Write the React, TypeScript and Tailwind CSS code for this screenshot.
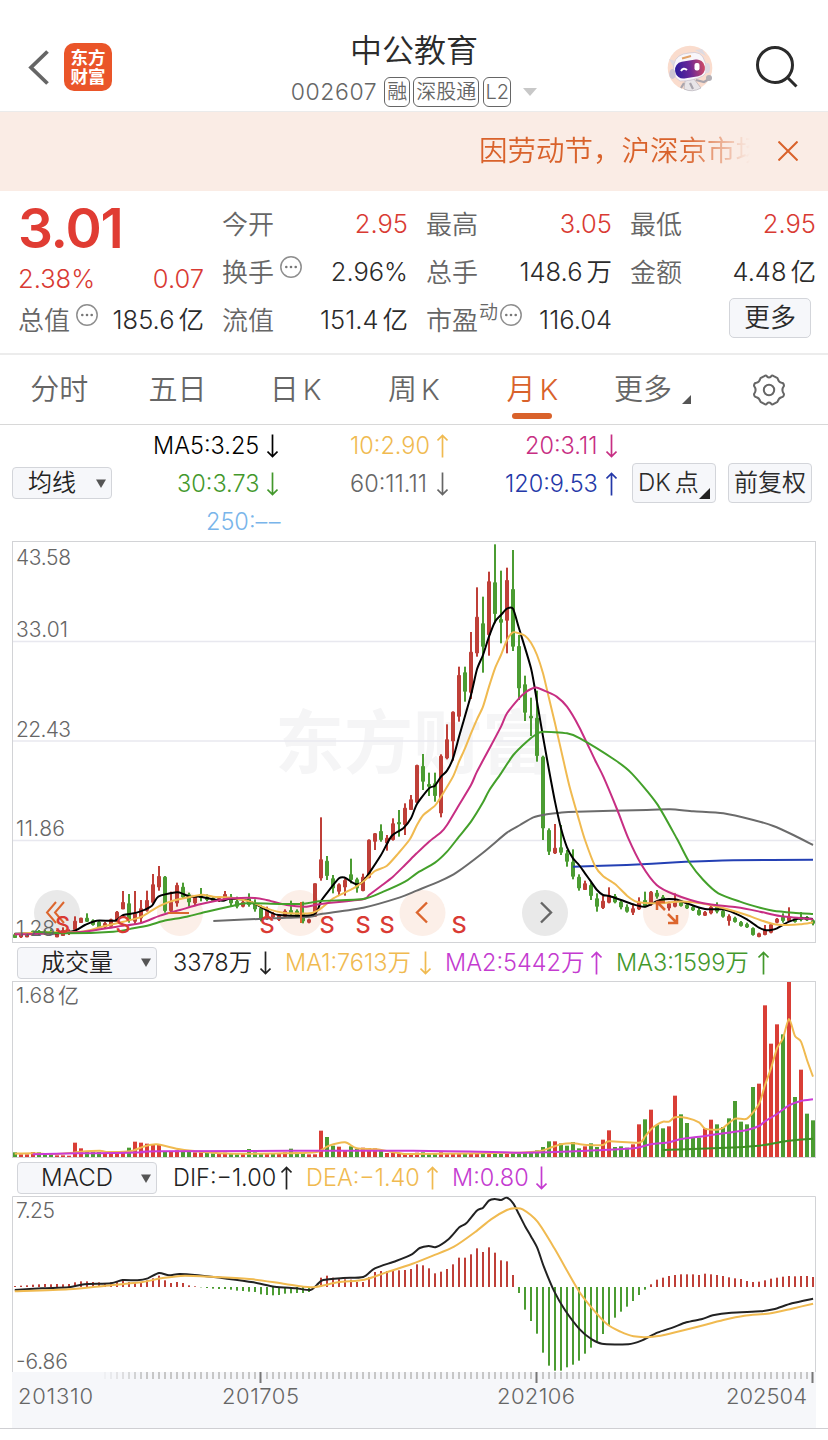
import React from 'react';
import clsx from 'clsx';

type Point = [number, number];
// direction, high, body top, body bottom, low
type Candle = ['r' | 'g', number, number, number, number];

const RED = '#bf3f38';
const GREEN = '#4b9c32';

const tabs = [
    { label: '分时' },
    { label: '五日' },
    { label: '日', k: true },
    { label: '周', k: true },
    { label: '月', k: true, active: true },
    { label: '更多', more: true },
];

const earlyCandles: Candle[] = [
    ['g', 579, 583, 594, 594], ['r', 583, 583, 592, 594], ['r', 583, 583, 592, 592], ['g', 572, 572, 583, 583], ['g', 570, 572, 583, 585],
    ['g', 570, 573, 583, 585], ['g', 568, 573, 583, 585], ['r', 570, 575, 592, 592], ['r', 562, 570, 588, 588], ['r', 568, 572, 582, 585],
    ['r', 529, 542, 570, 572], ['r', 533, 533, 549, 549], ['g', 520, 533, 545, 546], ['g', 538, 541, 555, 557], ['g', 540, 545, 562, 565],
    ['r', 546, 549, 562, 564], ['r', 536, 538, 560, 560], ['r', 513, 515, 545, 545], ['r', 453, 486, 508, 508], ['g', 462, 490, 542, 548],
    ['r', 453, 520, 545, 552], ['r', 480, 505, 535, 548], ['r', 452, 480, 512, 515], ['r', 402, 433, 488, 495], ['r', 378, 408, 442, 452],
    ['g', 408, 410, 513, 518], ['r', 455, 485, 513, 518], ['r', 428, 435, 490, 500], ['g', 428, 440, 472, 475], ['g', 458, 463, 487, 500],
    ['r', 465, 468, 490, 496], ['g', 444, 463, 474, 484], ['g', 463, 470, 480, 484], ['g', 468, 473, 483, 486], ['r', 470, 474, 483, 486],
    ['r', 453, 462, 480, 482], ['g', 462, 470, 490, 498], ['g', 470, 483, 500, 505], ['r', 482, 485, 500, 502], ['g', 460, 475, 495, 500],
    ['g', 478, 488, 508, 515], ['g', 495, 504, 540, 544], ['r', 500, 510, 530, 540], ['r', 516, 520, 532, 535], ['r', 522, 526, 540, 543],
    ['r', 508, 512, 530, 530], ['g', 482, 510, 520, 527], ['g', 508, 512, 530, 534], ['g', 485, 520, 544, 550], ['r', 536, 538, 548, 550],
    ['r', 430, 430, 530, 530],
];
const risingCandles: Candle[] = [
    ['r', 832, 958, 1015, 1022], ['g', 948, 962, 1008, 1020], ['g', 1005, 1015, 1045, 1060], ['r', 1030, 1033, 1055, 1067], ['r', 1015, 1020, 1042, 1067],
    ['g', 956, 1003, 1020, 1030], ['g', 1013, 1018, 1045, 1058], ['r', 1001, 1010, 1053, 1054], ['r', 898, 899, 1013, 1015], ['r', 879, 880, 905, 930],
    ['g', 853, 873, 900, 905], ['r', 885, 893, 910, 932], ['r', 835, 850, 900, 902], ['g', 810, 846, 853, 890], ['r', 790, 803, 855, 885],
    ['r', 765, 778, 810, 810], ['r', 674, 675, 788, 790], ['g', 642, 678, 725, 750], ['g', 698, 732, 740, 768], ['g', 698, 730, 768, 785],
    ['r', 643, 647, 820, 832], ['r', 553, 598, 655, 658], ['r', 514, 515, 604, 662], ['r', 380, 405, 530, 545], ['g', 380, 397, 455, 485],
    ['r', 276, 335, 458, 477], ['r', 142, 230, 340, 350], ['g', 170, 250, 320, 398], ['r', 95, 124, 285, 347], ['g', 13, 127, 222, 250],
    ['g', 92, 237, 248, 310], ['r', 83, 120, 242, 340], ['g', 30, 147, 320, 333], ['g', 285, 318, 445, 480], ['g', 407, 433, 518, 543],
    ['g', 473, 527, 535, 588], ['g', 452, 533, 648, 665], ['g', 647, 650, 865, 900], ['g', 865, 870, 935, 945], ['r', 852, 923, 940, 942],
    ['g', 855, 922, 938, 945],
];
const fallingCandles: Candle[] = [
    ['g', 270, 280, 305, 320], ['g', 268, 305, 350, 358], ['g', 343, 350, 385, 392], ['r', 362, 370, 390, 390], ['g', 367, 375, 408, 420],
    ['g', 400, 415, 440, 455], ['r', 408, 422, 444, 447], ['r', 382, 405, 428, 430], ['g', 402, 408, 427, 430], ['g', 422, 425, 442, 448],
    ['g', 433, 440, 455, 458], ['r', 435, 445, 458, 465], ['r', 412, 425, 448, 450], ['g', 395, 420, 438, 442], ['r', 393, 395, 430, 438],
    ['g', 390, 398, 410, 416], ['g', 405, 410, 428, 432], ['r', 425, 430, 445, 452], ['r', 400, 425, 440, 442], ['g', 425, 427, 438, 440],
    ['g', 430, 434, 445, 447], ['g', 438, 441, 451, 453], ['g', 443, 450, 465, 467], ['r', 453, 456, 467, 468], ['r', 435, 440, 460, 463],
    ['g', 427, 440, 455, 460], ['g', 448, 452, 470, 473], ['r', 463, 468, 483, 497], ['g', 470, 473, 486, 488], ['g', 483, 486, 498, 500],
    ['g', 488, 492, 502, 504], ['g', 502, 504, 525, 527], ['r', 518, 520, 531, 532], ['r', 495, 510, 525, 526], ['r', 490, 493, 518, 520],
    ['r', 474, 476, 488, 490], ['g', 460, 470, 483, 488], ['r', 442, 470, 483, 486], ['g', 472, 475, 486, 488], ['g', 456, 470, 480, 484],
    ['g', 468, 471, 481, 483], ['g', 478, 481, 491, 496],
];
const shift = (rows: Candle[], base: number) =>
    rows.map(([dir, ...v]) => ({ dir, v: v.map((n) => base + n / 3) }));
const candles = [...shift(earlyCandles, 740), ...shift(risingCandles, 540), ...shift(fallingCandles, 760)];

const place = (pts: number[], x0: number, y0: number, sx = 3): Point[] => {
    const out: Point[] = [];
    for (let i = 0; i < pts.length; i += 2) out.push([x0 + pts[i] / sx, y0 + pts[i + 1] / 3]);
    return out;
};

const priceLine = (a: number[], b: number[], c: number[]) => [...place(a, 0, 740), ...place(b, 320, 540), ...place(c, 560, 760)];

const averages = [
    {
        color: '#6b6b6b',
        pts: priceLine(
            [640, 543, 820, 535, 930, 530],
            [3, 1122, 130, 1103, 240, 1072, 290, 1052, 363, 1022, 410, 997, 489, 938, 561, 878, 600, 855, 640, 832, 680, 823],
            [0, 158, 50, 155, 260, 150, 330, 148, 400, 154, 490, 160, 580, 180, 640, 198, 700, 225, 759, 255],
        ),
    },
    { color: '#2440b4', pts: priceLine([], [], [39, 320, 200, 315, 350, 307, 520, 301, 759, 299]) },
    {
        color: '#000000',
        pts: priceLine(
            [44, 581, 130, 580, 170, 580, 225, 572, 255, 555, 290, 542, 345, 542, 370, 525, 410, 518, 455, 498, 475, 470, 530, 457, 545, 460, 570, 470, 600, 470, 640, 478, 670, 482, 690, 476, 745, 482, 790, 505, 835, 525, 940, 524],
            [3, 1083, 20, 1060, 57, 1015, 75, 1013, 93, 1025, 111, 1033, 129, 1025, 147, 1000, 183, 945, 215, 888, 250, 865, 273, 835, 291, 792, 327, 745, 345, 737, 363, 710, 381, 692, 399, 655, 420, 580, 453, 465, 471, 388, 489, 345, 507, 290, 525, 245, 543, 225, 561, 206, 579, 206, 597, 265, 633, 385, 651, 485, 669, 590, 687, 690, 705, 785],
            [3, 205, 21, 262, 39, 295, 57, 315, 75, 340, 93, 365, 111, 390, 129, 405, 147, 408, 183, 420, 219, 433, 255, 440, 300, 420, 345, 418, 381, 430, 435, 447, 489, 448, 525, 460, 561, 478, 597, 503, 615, 510, 633, 510, 651, 505, 687, 485, 723, 475, 759, 477],
        ),
    },
    {
        color: '#f0ba50',
        pts: priceLine(
            [44, 583, 98, 578, 240, 575, 300, 562, 370, 545, 420, 532, 450, 515, 475, 500, 510, 485, 560, 473, 605, 464, 640, 470, 690, 473, 745, 483, 800, 505, 850, 518, 930, 520],
            [3, 1105, 40, 1075, 100, 1045, 129, 1025, 165, 993, 200, 978, 235, 940, 270, 897, 291, 855, 310, 825, 345, 797, 363, 770, 399, 710, 417, 665, 435, 625, 453, 580, 471, 538, 489, 500, 507, 440, 525, 385, 543, 345, 561, 300, 579, 277, 597, 280, 615, 287, 633, 308, 651, 345, 669, 400, 687, 475, 705, 550],
            [10, 0, 30, 85, 57, 180, 75, 240, 105, 318, 129, 348, 165, 372, 201, 407, 230, 425, 290, 430, 350, 425, 400, 427, 450, 435, 500, 447, 560, 465, 600, 480, 640, 492, 680, 495, 720, 493, 759, 487],
        ),
    },
    {
        color: '#c72e83',
        pts: priceLine(
            [44, 583, 98, 582, 250, 575, 350, 560, 420, 550, 480, 527, 540, 510, 600, 493, 660, 480, 700, 475, 765, 474, 800, 480, 860, 495, 920, 500],
            [3, 1092, 129, 1078, 147, 1065, 183, 1038, 219, 1010, 255, 975, 290, 940, 327, 905, 363, 877, 381, 855, 417, 795, 453, 735, 471, 695, 507, 628, 543, 560, 561, 520, 597, 475, 615, 458, 633, 447, 651, 443, 680, 455, 710, 470, 741, 500, 777, 560],
            [105, 0, 130, 50, 172, 150, 205, 235, 245, 315, 290, 375, 340, 402, 430, 430, 530, 442, 600, 455, 660, 468, 759, 478],
        ),
    },
    {
        color: '#43a02a',
        pts: priceLine(
            [98, 575, 200, 580, 340, 575, 400, 565, 450, 555, 490, 543, 560, 530, 620, 515, 700, 497, 740, 490, 900, 492],
            [3, 1083, 129, 1077, 190, 1055, 255, 1025, 290, 1000, 345, 968, 381, 935, 417, 890, 453, 845, 489, 787, 507, 752, 543, 700, 580, 645, 620, 605, 650, 582, 669, 575, 741, 580, 780, 595],
            [165, 0, 215, 40, 290, 130, 350, 235, 390, 310, 430, 360, 475, 400, 540, 425, 600, 443, 640, 452, 700, 458, 759, 462],
        ),
    },
];

const volumes: [string, number][] = [
    ['g', 14], ['r', 8], ['r', 8], ['r', 15], ['g', 14], ['g', 9], ['g', 9], ['r', 5], ['r', 5], ['r', 4],
    ['r', 43], ['r', 26], ['g', 17], ['g', 16], ['g', 15], ['r', 12], ['r', 12], ['r', 12], ['r', 12], ['g', 28],
    ['r', 46], ['r', 43], ['r', 40], ['r', 37], ['r', 36], ['g', 18], ['r', 16], ['r', 20], ['g', 16], ['g', 15],
    ['r', 14], ['r', 14], ['g', 12], ['g', 11], ['r', 11], ['r', 13], ['g', 9], ['g', 8], ['r', 9], ['g', 24],
    ['g', 14], ['g', 12], ['r', 12], ['g', 12], ['r', 11], ['r', 14], ['g', 25], ['g', 15], ['g', 14], ['r', 8],
    ['r', 8], ['r', 79], ['g', 60], ['g', 34], ['r', 31], ['r', 20], ['g', 32], ['g', 24], ['r', 28], ['r', 27],
    ['r', 26], ['g', 18], ['r', 12], ['r', 12], ['r', 12], ['r', 11], ['r', 10], ['r', 13], ['g', 14], ['g', 12],
    ['g', 10], ['r', 14], ['r', 10], ['r', 9], ['r', 11], ['g', 9], ['r', 10], ['r', 12], ['g', 9], ['r', 12],
    ['g', 12], ['g', 9], ['r', 10], ['g', 13], ['g', 15], ['g', 15], ['g', 15], ['g', 20], ['g', 30], ['g', 47],
    ['r', 47], ['g', 41], ['g', 34], ['g', 45], ['g', 26], ['r', 32], ['g', 41], ['g', 30], ['r', 52], ['r', 80],
    ['g', 30], ['g', 32], ['g', 28], ['r', 38], ['r', 98], ['g', 113], ['r', 142], ['g', 96], ['g', 86], ['r', 92],
    ['r', 184], ['g', 128], ['g', 102], ['g', 58], ['g', 58], ['r', 86], ['r', 112], ['g', 98], ['g', 90], ['g', 116],
    ['g', 168], ['g', 106], ['g', 98], ['g', 210], ['r', 220], ['r', 455], ['r', 340], ['r', 398], ['g', 368], ['r', 525],
    ['g', 180], ['r', 262], ['g', 130], ['g', 110],
];

const volumeLines = [
    {
        color: '#f0ba50',
        pts: [
            ...place([44, 521, 100, 520, 160, 522, 220, 518, 240, 515, 300, 512, 320, 516, 390, 514, 430, 500, 470, 493, 540, 508, 600, 515, 700, 521, 850, 520, 950, 516, 985, 498, 1035, 487, 1070, 505, 1130, 508, 1200, 520, 1240, 522], 0, 980),
            ...place([0, 548, 60, 543, 87, 535, 123, 523, 160, 520, 200, 525, 249, 525, 267, 514, 357, 518, 375, 500, 393, 478, 411, 464, 429, 455, 447, 455, 465, 442, 501, 444, 537, 457, 555, 476, 591, 479, 609, 474, 645, 446, 681, 446, 717, 402, 735, 345, 753, 295, 771, 235, 789, 205, 807, 147, 825, 198, 843, 215, 861, 270, 879, 320], 520, 970),
        ],
    },
    {
        color: '#cb3bd6',
        pts: [
            ...place([98, 523, 230, 520, 350, 519, 430, 517, 480, 514, 1240, 512], 0, 980),
            ...place([0, 548, 105, 546, 230, 541, 340, 535, 393, 523, 447, 517, 483, 507, 555, 498, 610, 490, 681, 480, 717, 468, 735, 454, 771, 432, 807, 406, 843, 393, 879, 388], 520, 970),
        ],
    },
    { color: '#3f8f24', pts: place([429, 540, 600, 534, 717, 527, 771, 518, 807, 512, 879, 506], 520, 970) },
];

const macd = [
    3, 4, 5, 7, 8, 9, 8, 9, 8, 9, 14, 17, 17, 15, 14, 12, 14, 16, 18, 15, 12, 13, 20, 26, 34, 20, 12, 15, 12, 5, 2, -1, -3, -5, -6, -6, -8, -11, -12, -14,
    -15, -22, -24, -25, -24, -20, -19, -18, -18, -15, 2, 28, 34, 28, 25, 23, 22, 15, 15, 30, 45, 48, 48, 48, 50, 51, 54, 68, 65, 56,
    41, 46, 54, 68, 88, 88, 98, 116, 105, 119, 103, 80, 77, 36, -18, -68, -102, -140, -197, -236, -251, -251, -241, -233, -221, -200, -182, -165, -141, -115,
    -92, -74, -59, -42, -24, -8, 8, 22, 28, 33, 36, 38, 38, 38, 36, 40, 38, 36, 33, 29, 26, 24, 18, 15, 16, 20, 25, 28, 31, 33, 32, 33, 33, 30,
];

const dif = place(
    [28, 300, 80, 295, 130, 292, 160, 283, 210, 280, 232, 270, 260, 271, 280, 265, 301, 249, 320, 256, 340, 252, 375, 256, 430, 266, 480, 277, 520, 290, 560, 295, 588, 300, 600, 285, 612, 270, 650, 264, 688, 261, 710, 235, 750, 213, 780, 193, 795, 174, 812, 168, 826, 171, 850, 147, 870, 112, 883, 100, 903, 62, 915, 53, 926, 32, 937, 27, 949, 30, 960, 23, 972, 40, 983, 73, 995, 110, 1006, 140, 1018, 175, 1030, 230, 1050, 305, 1070, 360, 1098, 418, 1120, 447, 1140, 461, 1190, 463, 1215, 452, 1245, 428, 1275, 412, 1300, 397, 1330, 387, 1350, 376, 1385, 368, 1440, 364, 1465, 358, 1500, 340, 1540, 326],
    0, 1190, 1.894,
);
const dea = place(
    [28, 304, 130, 298, 200, 287, 270, 276, 305, 265, 350, 257, 420, 262, 480, 268, 540, 282, 590, 292, 640, 277, 690, 269, 730, 248, 780, 222, 820, 197, 860, 170, 900, 126, 930, 88, 960, 60, 975, 55, 990, 58, 1018, 95, 1050, 175, 1095, 300, 1120, 352, 1150, 403, 1175, 425, 1200, 439, 1230, 441, 1260, 434, 1310, 415, 1370, 390, 1410, 377, 1460, 370, 1500, 356, 1540, 341],
    0, 1190, 1.894,
);

const toPath = (pts: Point[]) =>
    pts.reduce((d, p, i) => {
        if (i === 0) return `M${p[0]} ${p[1]}`;
        const a = pts[i - 2] ?? pts[i - 1];
        const b = pts[i - 1];
        const c = pts[i + 1] ?? p;
        return `${d}C${b[0] + (p[0] - a[0]) / 8} ${b[1] + (p[1] - a[1]) / 8} ${p[0] - (c[0] - b[0]) / 8} ${p[1] - (c[1] - b[1]) / 8} ${p[0]} ${p[1]}`;
    }, '');

const Line = ({ pts, color }: { pts: Point[]; color: string }) => (
    <path d={toPath(pts)} fill="none" stroke={color} strokeWidth="2" strokeLinejoin="round" />
);

const Arrow = ({ up = false }: { up?: boolean }) => (
    <svg width="11" height="24" viewBox="0 0 11 24" fill="none" stroke="currentColor" strokeWidth="1.7" className={clsx('shrink-0', up && 'rotate-180')}>
        <path d="M5.5 .5v22M.5 17.5l5 5 5-5" />
    </svg>
);

const Info = () => (
    <svg width="22" height="22" viewBox="0 0 22 22" className="shrink-0">
        <circle cx="11" cy="11" r="10.2" fill="none" stroke="#8e8e8e" strokeWidth="1.5" />
        <circle cx="6.3" cy="11" r="1.3" fill="#777" />
        <circle cx="11" cy="11" r="1.3" fill="#777" />
        <circle cx="15.7" cy="11" r="1.3" fill="#777" />
    </svg>
);

const Robot = () => (
    <svg width="48" height="48" viewBox="0 0 48 48">
        <defs>
            <linearGradient id="visor" x1="0" y1="0" x2="1" y2="0">
                <stop offset="0" stopColor="#2c1d9e" />
                <stop offset=".5" stopColor="#6a2796" />
                <stop offset="1" stopColor="#cf4a66" />
            </linearGradient>
        </defs>
        <circle cx="24" cy="24" r="22.3" fill="#fadccd" />
        <path d="M19 37l9-2 7 9q-9 5-17 1z" fill="#e8e5e8" stroke="#b5b0b8" strokeWidth=".7" />
        <path d="M18 39l-3 5M30 36l8 2 5-3M24 39l3 6" stroke="#a9a5ad" strokeWidth="2.2" fill="none" />
        <circle cx="43" cy="34" r="3" fill="#b3afb5" />
        <path d="M3 15l9 3-4 6zM29 6l7-1 4 7z" fill="#dedae1" />
        <path d="M8 20Q10 10 23 9Q36 6 39 18Q43 28 37 32Q27 37 14 37Q5 32 8 20z" fill="#f8f6fa" stroke="#cfc9d4" strokeWidth=".8" />
        <ellipse cx="6.5" cy="30" rx="3.2" ry="5" fill="#cbc5d2" />
        <ellipse cx="41.500" cy="24" rx="2.500" ry="5" fill="#ded9e2" />
        <path d="M16 14.500l9-2.500" stroke="#e2a166" strokeWidth="2" />
        <rect x="9" y="16.500" width="30" height="17" rx="8" fill="url(#visor)" transform="rotate(-9 24 25)" />
        <path d="M15 27q2.500-4 6-1" stroke="#fff" strokeWidth="2" fill="none" />
        <rect x="28.500" y="19" width="5" height="7.500" rx="2" fill="#fff" />
    </svg>
);

const Gear = () => (
    <svg width="34" height="34" viewBox="0 0 34 34" fill="none" stroke="#666" strokeWidth="2" strokeLinejoin="round">
        <path d="M12.3 3.1Q14.2 1.800 15 3.500Q17 5.500 19 3.500Q19.800 1.800 21.700 3.100L25.500 5.200Q26.800 9.300 29.600 9.800Q31.800 10 32 12.800Q28.800 17 32 21.200Q31.800 24 29.600 24.200Q26.800 24.700 25.500 28.800L21.700 30.900Q19.800 32.200 19 30.500Q17 28.500 15 30.500Q14.200 32.200 12.300 30.900L8.500 28.800Q7.200 24.700 4.400 24.200Q2.200 24 2 21.200Q5.200 17 2 12.800Q2.200 10 4.400 9.800Q7.200 9.300 8.500 5.200Z" />
        <circle cx="17" cy="17" r="5.2" />
    </svg>
);

type QuoteProps = { label: string; value: string; unit?: string; red?: boolean; info?: boolean; sup?: string };

const Quote = ({ label, value, unit, red, info, sup }: QuoteProps) => (
    <div className="flex h-12 items-center whitespace-nowrap">
        <span className="pt-0.5 text-[26px] text-[#666]">{label}</span>
        {sup && <span className="-mt-4 ml-px mr-0.5 text-[19px] text-[#666]">{sup}</span>}
        {info && <span className={clsx('-mt-2.5', !sup && 'ml-1.5')}><Info /></span>}
        <span className={clsx('ml-auto text-[25.5px]', red ? 'text-[#d93a33]' : 'text-[#2b2b2b]')}>
            {value}
            {unit && <span className="ml-1">{unit}</span>}
        </span>
    </div>
);

const Select = ({ text, className }: { text: string; className: string }) => (
    <div className={clsx('flex h-8 items-center rounded border border-[#d3d5da] bg-[#f6f7fa] text-2xl text-[#222]', className)}>
        <span className="flex-1 pr-[5px] text-center">{text}</span>
        <svg width="10" height="9" viewBox="0 0 10 9"><path d="M0 .5h10L5 9z" fill="#555" /></svg>
    </div>
);

const Indicator = ({ text, up, className }: { text: string; up?: boolean; className: string }) => (
    <span className={clsx('flex items-center justify-between whitespace-nowrap text-[23.5px]', className)}>
        <span>{text}</span>
        <Arrow up={up} />
    </span>
);

const axisText = { fontSize: 21, fill: '#666' };

const PriceChart = () => (
    <svg width="828" height="403" viewBox="0 541 828 403" className="block">
        <text x="275" y="768" fontSize="69" fontWeight="700" fill="#f5f5f6" textLength="276">东方财富</text>
        <rect x="12.5" y="541.5" width="803" height="401" fill="none" stroke="#d2d3d6" />
        {[641.5, 741, 840.5].map((y) => <path key={y} d={`M13 ${y}H815`} stroke="#e8e8ef" strokeWidth="1.3" />)}
        <circle cx="57" cy="913" r="23" fill="#e9e9e9" />
        <circle cx="545" cy="913" r="23" fill="#e9e9e9" />
        {[180, 300, 422.5, 666].map((x) => <circle key={x} cx={x} cy="913" r="23" fill="#fcefe8" />)}
        {candles.map(({ dir, v }, i) => (
            <g key={i} fill={dir === 'r' ? RED : GREEN}>
                <rect x={14 + i * 6} y={v[0]} width="2" height={Math.max(1, v[3] - v[0])} />
                <rect x={13 + i * 6} y={v[1]} width="4" height={Math.max(1.5, v[2] - v[1])} rx=".7" />
            </g>
        ))}
        {averages.map((a, i) => <Line key={i} {...a} />)}
        <g {...axisText}>
            <text x="16" y="564.500" textLength="55">43.58</text>
            <text x="16" y="636.500" textLength="52">33.01</text>
            <text x="16" y="736.500" textLength="55">22.43</text>
            <text x="16" y="835.500" textLength="49">11.86</text>
            <text x="16" y="936" textLength="39">1.28</text>
        </g>
        <g fill="none" stroke="#dc662e" strokeWidth="2">
            <path d="M56 902L47 912.5L56 923M64 902L55 912.5L64 923M168 913h21M301 902v21" />
            <path d="M427 902.5L417 912.5L427 922.5" strokeWidth="2.4" />
            <path d="M657 910v-8h8M657 902l8 8M677 915v8h-9M677 923l-9-9" strokeWidth="2.5" />
            <path d="M541 902.5L551 912.5L541 922.5" stroke="#666" strokeWidth="2.4" />
        </g>
        {[62.5, 123, 267, 327, 363, 387, 459].map((x) => (
            <text key={x} x={x} y="932.5" textAnchor="middle" fontSize="23.5" fontWeight="500" fill="#d93a33">S</text>
        ))}
    </svg>
);

const VolumeChart = () => (
    <svg width="828" height="177" viewBox="0 981 828 177" className="block">
        <rect x="12.5" y="981.5" width="803" height="176" fill="none" stroke="#d2d3d6" />
        {volumes.map(([dir, h], i) => (
            <rect key={i} x={13 + i * 6} y={1157 - h / 3} width="4" height={h / 3} fill={dir === 'r' ? '#d93e36' : GREEN} />
        ))}
        {volumeLines.map((l, i) => <Line key={i} {...l} />)}
        <text x="16" y="1002.5" textLength="39" {...axisText}>1.68</text>
        <text x="58" y="1003" {...axisText}>亿</text>
    </svg>
);

const MacdChart = () => (
    <svg width="828" height="176" viewBox="0 1196 828 176" className="block overflow-visible">
        <path d="M12.5 1372V1196.5H815.5V1372" fill="none" stroke="#d2d3d6" />
        {macd.map((h, i) => (
            <rect key={i} x={14 + i * 6} y={h > 0 ? 1287 - h / 3 : 1287} width="2" height={Math.abs(h) / 3} fill={h > 0 ? RED : GREEN} />
        ))}
        <Line pts={dif} color="#222" />
        <Line pts={dea} color="#f0ba50" />
        <g {...axisText}>
            <text x="16" y="1218" textLength="39">7.25</text>
            <text x="16" y="1368.5" textLength="52">-6.86</text>
        </g>
    </svg>
);

const TimeAxis = () => (
    <div className="border-b border-[#cfcfd3]">
        <svg width="828" height="56" viewBox="0 1372 828 56" className="block">
            <rect x="12" y="1372" width="804" height="56" fill="#f6f7fa" />
            {Array.from({ length: 119 }, (_, k) => k + 15).map((i) => {
                const major = i === 41 || i === 87 || i === 133;
                return (
                    <rect key={i} x={14.2 + i * 6 - (major ? 0.7 : 0)} y="1372" width={major ? 2 : 1.6} height={major ? 11 : 7} fill={major ? '#777' : '#bbb'} opacity={Math.min(1, (i - 14) / 8)} />
                );
            })}
            <g fontSize="22" fill="#666">
                <text x="18" y="1404" textLength="75">201310</text>
                <text x="222" y="1404" textLength="77">201705</text>
                <text x="497" y="1404" textLength="78">202106</text>
                <text x="726" y="1404" textLength="81">202504</text>
            </g>
        </svg>
    </div>
);

const App = () => {
    return (
        <div className="h-[1440px] w-[828px] overflow-hidden bg-white font-['Inter','Noto_Sans_CJK_SC',sans-serif] font-[350] leading-none text-[#2b2b2b]">
            {/* ---header-------- */}
            <header className="flex h-28 items-start border-b border-[#ebebeb] pl-7">
                <svg width="22" height="36" viewBox="0 0 22 36" className="mt-[49px]" fill="none" stroke="#666" strokeWidth="3.8">
                    <path d="M19.5 2.5L3 18.5L19.5 34.5" />
                </svg>
                <div className="ml-3.5 mt-[43px] flex size-12 flex-col items-center justify-center rounded-[10px] bg-[#ea5529] text-[17.5px] font-bold leading-[19px] text-white">
                    <span>东方</span>
                    <span>财富</span>
                </div>
                <div className="ml-[176px] flex w-[252px] flex-col items-center pt-[35px]">
                    <h1 className="text-[32px] leading-8">中公教育</h1>
                    <div className="mt-2.5 flex h-[30px] items-center text-[#666]">
                        <span className="mr-[7px] text-[23px] tracking-[0.6px]">002607</span>
                        <span className="mr-[3px] flex h-[30px] w-[26px] items-center justify-center rounded-md border border-[#666] text-xl">融</span>
                        <span className="mr-1 flex h-[30px] w-[66px] items-center justify-center rounded-md border border-[#666] text-xl">深股通</span>
                        <span className="mr-3 flex h-[30px] w-[28px] items-center justify-center rounded-md border border-[#666] text-xl">L2</span>
                        <svg width="14" height="8" viewBox="0 0 14 8"><path d="M0 0h14L7 8z" fill="#c8c8c8" /></svg>
                    </div>
                </div>
                <div className="ml-[126px] mt-11"><Robot /></div>
                <svg width="46" height="46" viewBox="0 0 46 46" className="ml-10 mt-11" fill="none" stroke="#2b2b2b" strokeWidth="3">
                    <circle cx="21" cy="21" r="17.5" />
                    <path d="M33 33L42.500 42.500" />
                </svg>
            </header>

            {/* ---notice-------- */}
            <div className="flex h-[79px] items-center bg-[#faece5] pb-px text-[#d9622b]">
                <div className="ml-[479px] w-[271px] overflow-hidden whitespace-nowrap text-[28.5px] leading-10 [mask-image:linear-gradient(to_right,black_76%,transparent)]">
                    因劳动节，沪深京市场
                </div>
                <svg width="20" height="20" viewBox="0 0 20 20" className="ml-7" stroke="currentColor" strokeWidth="2">
                    <path d="M.5 .5l19 19M19.5 .5l-19 19" />
                </svg>
            </div>

            {/* ---quote-------- */}
            <section className="flex h-[164px] gap-[18px] border-b-2 border-[#ececec] pl-[18px] pt-[9px]">
                <div className="w-[186px] shrink-0">
                    <p className="h-14 text-[55px] font-semibold leading-[56px] tracking-[-1.2px] text-[#e03c33]">3.01</p>
                    <p className="flex h-10 items-center justify-between pt-1.5 text-[25.5px] text-[#d93a33]">
                        <span>2.38%</span>
                        <span>0.07</span>
                    </p>
                    <Quote label="总值" value="185.6" unit="亿" info />
                </div>
                <div className="w-[186px] shrink-0">
                    <Quote label="今开" value="2.95" red />
                    <Quote label="换手" value="2.96%" info />
                    <Quote label="流值" value="151.4" unit="亿" />
                </div>
                <div className="w-[186px] shrink-0">
                    <Quote label="最高" value="3.05" red />
                    <Quote label="总手" value="148.6" unit="万" />
                    <Quote label="市盈" value="116.04" sup="动" info />
                </div>
                <div className="w-[186px] shrink-0">
                    <Quote label="最低" value="2.95" red />
                    <Quote label="金额" value="4.48" unit="亿" />
                    <button className="ml-[99px] mt-0.5 flex h-10 w-[82px] items-center justify-center rounded-[5px] border border-[#d3d5da] bg-[#f6f7fa] text-[26px]">更多</button>
                </div>
            </section>

            {/* ---period tabs-------- */}
            <nav className="grid h-[70px] grid-cols-7 border-b border-[#d8d8d8] text-[29px] text-[#666]">
                {tabs.map((tab) => (
                    <div key={tab.label} className={clsx('relative flex items-center justify-center', tab.active && 'text-[#d9622b]')}>
                        {tab.label}
                        {tab.k && <span className="ml-1">K</span>}
                        {tab.active && <span className="absolute bottom-[5px] h-1.5 w-10 rounded-full bg-[#d9622b]" />}
                        {tab.more && (
                            <svg width="9" height="9" viewBox="0 0 9 9" className="-mr-1 ml-2.5 mt-5"><path d="M9 0v9H0z" fill="#555" /></svg>
                        )}
                    </div>
                ))}
                <div className="flex items-center justify-center"><Gear /></div>
            </nav>

            {/* ---moving averages-------- */}
            <section className="flex h-[116px] pl-3">
                <Select text="均线" className="mt-[42px] w-[100px] shrink-0 pr-[5px]" />
                <div className="ml-8 mt-0.5 grid w-[476px] shrink-0 grid-cols-[134px_170px_169px] grid-rows-[38px_38px_37px]">
                    <Indicator text="MA5:3.25" className="ml-auto w-[125px] text-black" />
                    <Indicator text="10:2.90" up className="ml-auto w-[98px] text-[#f0ba50]" />
                    <Indicator text="20:3.11" className="ml-auto w-[92px] text-[#c72e83]" />
                    <Indicator text="30:3.73" className="ml-auto w-[101px] text-[#43982c]" />
                    <Indicator text="60:11.11" className="ml-auto w-[98px] text-[#666]" />
                    <Indicator text="120:9.53" up className="ml-auto w-[112px] text-[#2438a8]" />
                    <span className="flex items-center pl-[62px] text-[23.5px] text-[#79b5ea]">250:<span className="tracking-[1.5px]">––</span></span>
                </div>
                <button className="relative ml-3 mt-[38px] flex h-10 w-[84px] shrink-0 items-center rounded border border-[#d3d5da] bg-[#f6f7fa] pl-[5px] text-2xl">
                    DK<span className="ml-1">点</span>
                    <svg width="11" height="11" viewBox="0 0 11 11" className="absolute bottom-[3px] right-[5px]"><path d="M11 0v11H0z" fill="#222" /></svg>
                </button>
                <button className="ml-3 mt-[38px] flex h-10 w-[84px] shrink-0 items-center justify-center rounded border border-[#d3d5da] bg-[#f6f7fa] text-2xl">前复权</button>
            </section>

            <PriceChart />

            {/* ---volume-------- */}
            <div className="flex h-[37px] items-center pl-[17px]">
                <Select text="成交量" className="w-[140px] pr-[5px]" />
                <Indicator text="3378万" className="ml-4 w-[98px] text-[#222]" />
                <Indicator text="MA1:7613万" className="ml-3.5 w-[146px] text-[#f0ba50]" />
                <Indicator text="MA2:5442万" up className="ml-3.5 w-[157px] text-[#c43bd0]" />
                <Indicator text="MA3:1599万" up className="ml-3.5 w-[153px] text-[#43982c]" />
            </div>
            <VolumeChart />

            {/* ---macd-------- */}
            <div className="flex h-[38px] items-center pl-[17px] pt-0.5">
                <Select text="MACD" className="w-[140px] pr-[5px]" />
                <Indicator text="DIF:−1.00" up className="ml-4 w-[119px] text-[#222]" />
                <Indicator text="DEA:−1.40" up className="ml-3.5 w-[132px] text-[#f0ba50]" />
                <Indicator text="M:0.80" className="ml-3.5 w-[95px] text-[#c43bd0]" />
            </div>
            <MacdChart />
            <TimeAxis />
        </div>
    );
};

export default App;
